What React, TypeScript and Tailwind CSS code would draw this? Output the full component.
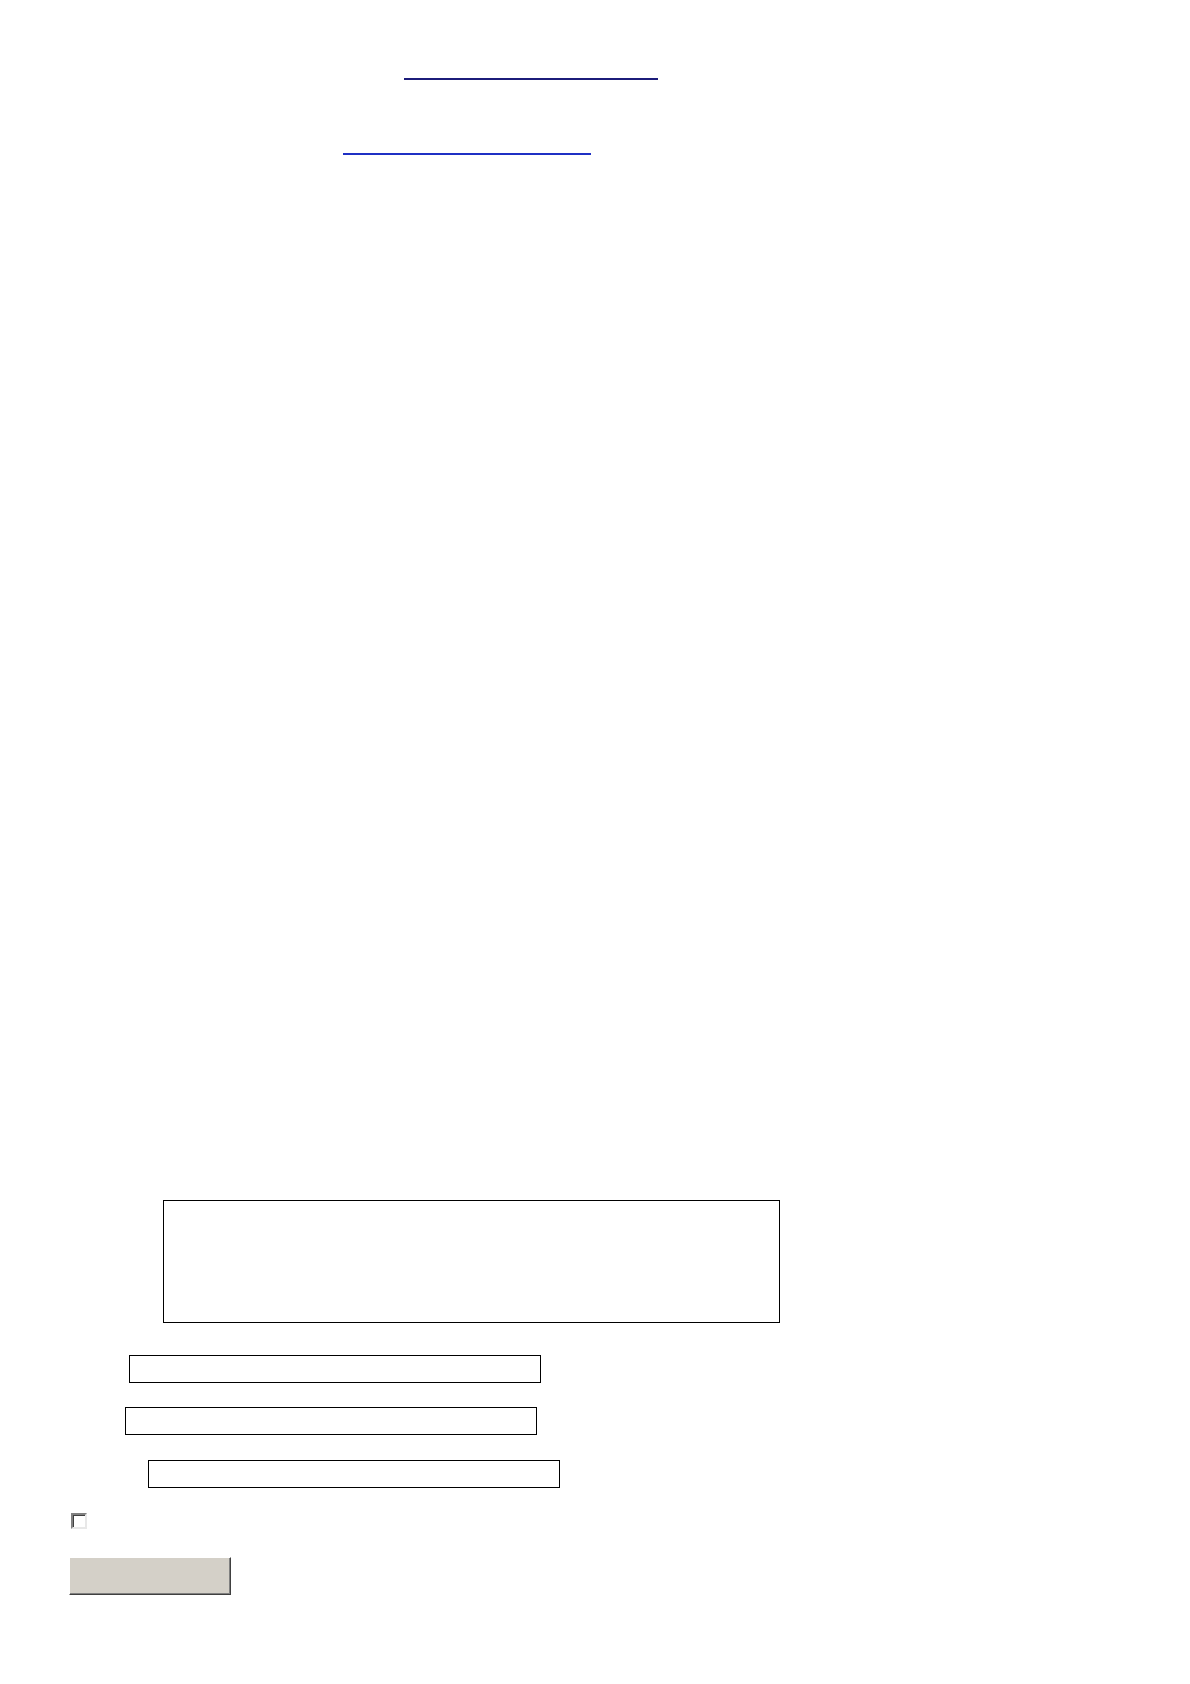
export default function App() {
  return (
    <div className="w-[1190px] h-[1684px] bg-white font-['Liberation_Sans',sans-serif] text-[13px] text-black flex flex-col items-start">
      <div className="pl-[404px] pt-[66px]">
        <a href="#" className="block w-[254px] h-[14px] border-b-2 border-[#1c1c7a]">
          {"\u00a0"}
        </a>
      </div>
      <div className="pl-[343px] mt-[61px]">
        <a href="#" className="block w-[248px] h-[14px] border-b-2 border-[#1f30c4]">
          {"\u00a0"}
        </a>
      </div>

      <textarea
        className="ml-[163px] mt-[1045px] w-[617px] h-[123px] border border-black resize-none outline-none"
        defaultValue=""
      />

      <input type="text" className="ml-[129px] mt-[32px] w-[412px] h-[28px] border border-black outline-none" />
      <input type="text" className="ml-[125px] mt-[24px] w-[412px] h-[28px] border border-black outline-none" />
      <input type="text" className="ml-[148px] mt-[25px] w-[412px] h-[28px] border border-black outline-none" />

      <span className="ml-[71px] mt-[25px] block w-[16px] h-[16px] bg-white border-2 border-t-[#808080] border-l-[#808080] border-b-[#e8e8e8] border-r-[#e8e8e8] shadow-[inset_1px_1px_0_#404040]" />

      <button
        type="button"
        className="ml-[69px] mt-[28px] w-[162px] h-[38px] bg-[#d4d0c8] border border-t-white border-l-white border-b-[#404040] border-r-[#404040] shadow-[inset_-1px_-1px_0_#808080]"
      />
    </div>
  );
}
